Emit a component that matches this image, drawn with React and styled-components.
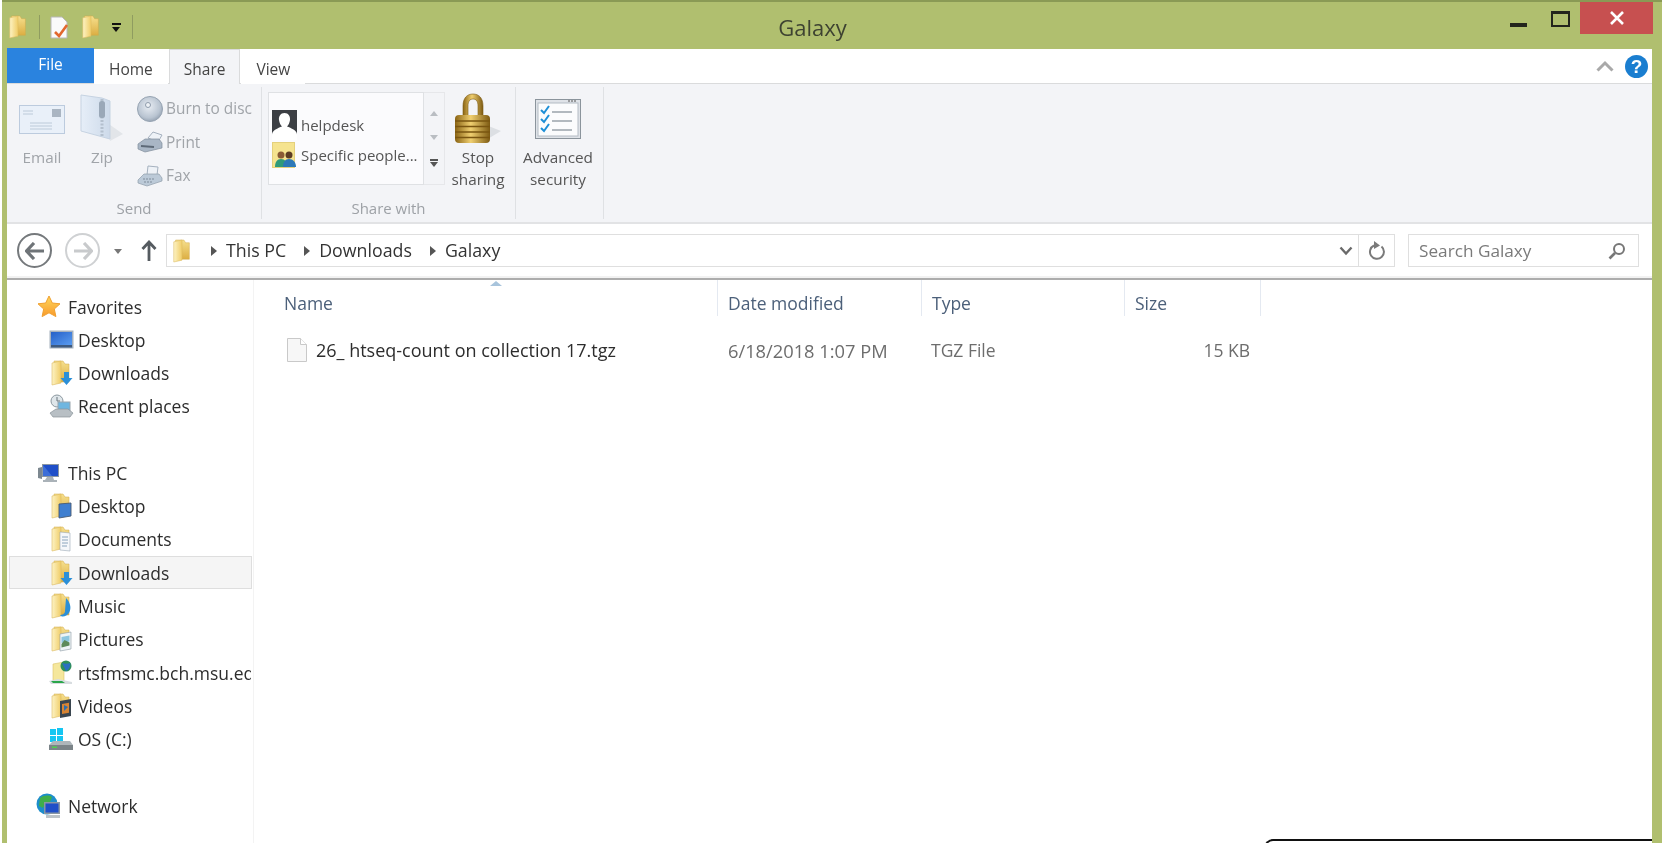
import React from "react";
import styled, { createGlobalStyle } from "styled-components";

const FONT = `"Open Sans", "Noto Sans", "Liberation Sans", sans-serif`;

const GlobalStyle = createGlobalStyle`
    html, body {
        margin: 0;
        padding: 0;
        height: 100%;
        background: #fff;
        overflow: hidden;
    }
    #root {
        height: 100%;
    }
`;

// icons ---------------------------------------------------------------

const Folder = ({ w = 24, h = 26, children }) => (
    <svg width={w} height={h} viewBox="0 0 24 26">
        <defs>
            <linearGradient id="leaf" x1="0" x2="1" y1="0" y2="0">
                <stop offset="0" stopColor="#fdf3c4" />
                <stop offset="1" stopColor="#f0cd68" />
            </linearGradient>
            <linearGradient id="back" x1="0" x2="0" y1="0" y2="1">
                <stop offset="0" stopColor="#f6e08e" />
                <stop offset="1" stopColor="#dcae42" />
            </linearGradient>
        </defs>
        <path d="M5 1h9l2 3h4v18H5z" fill="url(#back)" stroke="#d0a848" strokeWidth=".5" />
        <path d="M3 3l9-2v22l-9 2z" fill="url(#leaf)" stroke="#dcbb62" strokeWidth=".6" />
        {children}
    </svg>
);

const overlays = {
    plain: null,
    download: <path d="M15 12h5v6h3.500l-6 7-6-7H15z" fill="#2b8fd8" />,
    desktop: <path d="M10 11l12-1v13l-12 2z" fill="#3f7fd0" stroke="#4a5a70" strokeWidth=".9" />,
    documents: (
        <g>
            <path d="M11 6l10 1v18l-10-1z" fill="#f5f7fa" stroke="#9aa7b5" strokeWidth=".6" />
            <path d="M13 11h6M13 14h6M13 17h6M13 20h5" stroke="#7f9ab5" strokeWidth=".9" />
        </g>
    ),
    music: <path d="M17 5c4 4 6 10 3 15-2 3-7 5-9 2 2 0 5-1 5-4z" fill="#2b8fd8" />,
    pictures: (
        <g>
            <path d="M11 8l11-2v17l-11 2z" fill="#eef4f6" stroke="#8d9aa5" strokeWidth=".6" />
            <path d="M12.500 11l8-1.500v6l-8 1.500z" fill="#8cc6e0" />
            <path d="M12.500 18l3-4 5 2.500v3l-8 2z" fill="#5d8a5a" />
        </g>
    ),
    videos: (
        <g>
            <path d="M11 8l11-2v17l-11 2z" fill="#3a4650" />
            <path d="M13 11l7-1.200v10l-7 1.200z" fill="#d78433" />
            <path d="M15 12l4 2-4 4z" fill="#2b6fb0" />
        </g>
    ),
};

const NavFolder = ({ kind }) => <Folder>{overlays[kind]}</Folder>;

const DesktopIcon = () => (
    <svg width="25" height="20" viewBox="0 0 25 20">
        <defs>
            <linearGradient id="screen" x1="0" x2="1" y1="0" y2="1">
                <stop offset="0" stopColor="#2560c8" />
                <stop offset="1" stopColor="#5a9cf0" />
            </linearGradient>
        </defs>
        <rect x="0.500" y="0.500" width="24" height="18" fill="#a6b1bd" />
        <rect x="2" y="2" width="21" height="13" fill="url(#screen)" />
        <rect x="2" y="15" width="21" height="2.500" fill="#3d5a80" />
    </svg>
);

const RecentIcon = () => (
    <svg width="25" height="25" viewBox="0 0 25 25">
        <circle cx="8" cy="7" r="6" fill="#dfe6ea" stroke="#8c98a0" />
        <path d="M8 3v4h3" stroke="#69757d" fill="none" />
        <rect x="9" y="8" width="12" height="9" fill="#6fb6e0" stroke="#9aa5ad" />
        <path d="M1 19l6-4h12l5 4-3 4H4z" fill="#b8bfc4" stroke="#8a9399" strokeWidth=".7" />
    </svg>
);

const StarIcon = () => (
    <svg width="24" height="23" viewBox="0 0 24 23">
        <defs>
            <linearGradient id="star" x1="0" x2="0" y1="0" y2="1">
                <stop offset="0" stopColor="#fdd75a" />
                <stop offset="1" stopColor="#f99a2c" />
            </linearGradient>
        </defs>
        <path
            d="M12 1l3.300 7 7.700.800-5.700 5.200 1.600 7.600L12 17.800l-6.900 3.800 1.600-7.600L1 8.800 8.700 8z"
            fill="url(#star)"
            stroke="#f0a030"
        />
    </svg>
);

const PcIcon = () => (
    <svg width="22" height="20" viewBox="0 0 22 20">
        <path d="M0 5l4-1v12l-4-1z" fill="#7d8890" />
        <rect x="4" y="1" width="17" height="13" fill="#8b97a2" />
        <path d="M5 2h15v11H5z" fill="#1f4fc8" />
        <path d="M5 2l9 11H5z" fill="#5c8fe8" opacity=".5" />
        <path d="M9 14h6l1 3H7zM5 17h14v2H5z" fill="#aab2b8" />
    </svg>
);

const ServerIcon = () => (
    <svg width="24" height="26" viewBox="0 0 24 26">
        <path d="M4 4l11-2v19H4z" fill="#f5e79c" stroke="#dcc56a" strokeWidth=".6" />
        <circle cx="17" cy="6" r="5.500" fill="#2f8f5a" />
        <path d="M13 3c3 1 6 1 8 0 1 3-1 7-4 8z" fill="#2b6fc0" />
        <path d="M0 21l9-2 14 3v2H2z" fill="#d8dde0" />
        <path d="M2 21h11l3 2H4z" fill="#2aa64a" />
    </svg>
);

const DriveIcon = () => (
    <svg width="25" height="23" viewBox="0 0 25 23">
        <path d="M1 1h6v6H1zM8 0h6v7H8zM1 8h6v6H1zM8 8h6v6H8z" fill="#15c6f2" />
        <path d="M0 17l4-4h17l3 4v5H0z" fill="#aeb6ba" />
        <path d="M0 17h24v5H0z" fill="#7b8488" />
        <rect x="3" y="18.500" width="5" height="1.500" fill="#4fd04f" />
    </svg>
);

const NetworkIcon = () => (
    <svg width="26" height="26" viewBox="0 0 26 26">
        <circle cx="11" cy="11" r="10.500" fill="#1d8ecb" />
        <path d="M4 5c4-3 9-3 12-1l-2 5-5 1-2 5-4-2z" fill="#3fae4a" />
        <rect x="8" y="9" width="16" height="12" fill="#8a97a3" />
        <rect x="9.500" y="10.500" width="13" height="9" fill="#1f4fc8" />
        <path d="M10 22h14v3H10z" fill="#bcc3c8" />
    </svg>
);

const FileIcon = () => (
    <svg width="20" height="24" viewBox="0 0 20 24">
        <path d="M.500.500h13l6 6v17H.500z" fill="#f7f7f7" stroke="#c9c9c9" />
        <path d="M13.500.500v6h6" fill="#fff" stroke="#c9c9c9" />
    </svg>
);

const EnvelopeIcon = () => (
    <svg width="46" height="29" viewBox="0 0 46 29">
        <rect x=".500" y=".500" width="45" height="28" fill="#e9f0f9" stroke="#bccbde" />
        <rect x="33" y="4" width="9" height="8" fill="#aab5c2" />
        <path d="M4 6h10M4 9h10M11 18h22M11 21h22M11 24h22" stroke="#bccad9" />
    </svg>
);

const ZipIcon = () => (
    <svg width="44" height="50" viewBox="0 0 44 50">
        <defs>
            <linearGradient id="zipBody" x1="0" x2="1" y1="0" y2="0">
                <stop offset="0" stopColor="#e6eef8" />
                <stop offset="1" stopColor="#cddaea" />
            </linearGradient>
        </defs>
        <path d="M26 28l17 12-13 7z" fill="#e2e5e9" />
        <path d="M1 1l21 3 8 3v38L1 37z" fill="url(#zipBody)" stroke="#c6d3e2" />
        <path d="M22 5v38" stroke="#b4c0ce" strokeWidth="3" strokeDasharray="2 1.500" />
        <rect x="19" y="7" width="6" height="17" rx="2.500" fill="#9aa8b8" />
    </svg>
);

const DiscIcon = () => (
    <svg width="26" height="26" viewBox="0 0 26 26">
        <defs>
            <radialGradient id="disc" cx=".45" cy=".4" r=".65">
                <stop offset="0" stopColor="#e8edf3" />
                <stop offset=".7" stopColor="#b9c4d1" />
                <stop offset="1" stopColor="#8f9cac" />
            </radialGradient>
        </defs>
        <circle cx="13" cy="13" r="12.500" fill="url(#disc)" stroke="#96a3b2" />
        <circle cx="11" cy="9" r="2.500" fill="#eef2f6" stroke="#8f9cac" />
    </svg>
);

const PrintIcon = () => (
    <svg width="26" height="22" viewBox="0 0 26 22">
        <path d="M11 7l5-6 9 3-4 7z" fill="#eef2f7" stroke="#a5b1bf" />
        <path d="M1 13l7-5h14l3 4v5L8 21 1 18z" fill="#a9b6c5" stroke="#7f8c9b" strokeWidth=".7" />
        <path d="M4 15l13 1" stroke="#5e6a78" strokeWidth="1.800" />
    </svg>
);

const FaxIcon = () => (
    <svg width="26" height="22" viewBox="0 0 26 22">
        <path d="M11 1l10 1-1 8H10z" fill="#eef2f7" stroke="#a5b1bf" />
        <path d="M1 15l6-6h15l3 4v3L10 21 1 18z" fill="#bccad8" stroke="#8f9dab" strokeWidth=".7" />
        <path d="M6 14h12M7 17h9" stroke="#7f8c9b" strokeDasharray="2 1" />
    </svg>
);

const PersonIcon = () => (
    <svg width="25" height="30" viewBox="0 0 25 30">
        <rect width="25" height="30" fill="#3c3f44" />
        <path d="M12.500 3c4 0 6 3.500 5.500 7-.3 2.500-1.500 5-3 6.500 4 1.500 10 4 10 8V30H0v-5.500c0-4 6-6.500 10-8-1.500-1.500-2.700-4-3-6.500-.5-3.500 1.500-7 5.500-7z" fill="#fff" />
    </svg>
);

const PeopleIcon = () => (
    <svg width="25" height="26" viewBox="0 0 25 26">
        <rect x=".500" y=".500" width="22" height="25" fill="#f5e38f" stroke="#e4d07c" />
        <circle cx="9" cy="13" r="3.500" fill="#8a5a35" />
        <path d="M3 25c0-5 2-8 6-8s6 3 6 8z" fill="#2f9a7a" />
        <circle cx="17" cy="13" r="3.500" fill="#5c3c24" />
        <path d="M11 25c0-5 2-8 6-8s7 3 7 8z" fill="#2c78b8" />
    </svg>
);

const LockIcon = () => (
    <svg width="48" height="52" viewBox="0 0 48 52">
        <defs>
            <linearGradient id="brass" x1="0" x2="1" y1="0" y2="0">
                <stop offset="0" stopColor="#8a6414" />
                <stop offset=".45" stopColor="#f0cf70" />
                <stop offset="1" stopColor="#7d5a12" />
            </linearGradient>
        </defs>
        <path d="M32 32l15 6-15 9z" fill="#dcdfe3" />
        <path d="M9 24V13C9 5 13 1 19 1s10 4 10 12v11h-5V13c0-5-2-7-5-7s-5 2-5 7v11z" fill="url(#brass)" stroke="#7d5a12" strokeWidth=".6" />
        <rect x="1" y="22" width="35" height="28" rx="4" fill="url(#brass)" />
        <path d="M1 28h35M1 33.500h35M1 39h35M1 44.500h35" stroke="#7a5510" strokeWidth="1.400" />
    </svg>
);

const SecurityIcon = () => (
    <svg width="46" height="40" viewBox="0 0 46 40">
        <rect x=".500" y=".500" width="45" height="39" fill="#dfe3e8" stroke="#8b949c" />
        <rect x="3" y="4" width="40" height="33" fill="#fbfcfd" stroke="#b4bcc4" />
        <path d="M33 2h2M36 2h2M39 2h2" stroke="#555" />
        <path d="M17 13h20M17 22h20M17 31h20" stroke="#9aa3ab" strokeWidth="1.500" />
        <path d="M6 11l3 3 5-7M6 20l3 3 5-7M6 29l3 3 5-7" stroke="#1d8fd6" strokeWidth="2" fill="none" />
    </svg>
);

const DocCheckIcon = () => (
    <svg width="20" height="25" viewBox="0 0 20 25">
        <path d="M1 2h11l5 5v16H1z" fill="#fafafa" stroke="#b8b8b8" />
        <path d="M5 17l4 4 8-11" stroke="#e2682e" strokeWidth="2.600" fill="none" />
    </svg>
);

// page ----------------------------------------------------------------

const sendSmall = [
    { label: "Burn to disc", icon: <DiscIcon /> },
    { label: "Print", icon: <PrintIcon /> },
    { label: "Fax", icon: <FaxIcon /> },
];

const navItems = [
    { label: "Favorites", icon: <StarIcon />, top: true },
    { label: "Desktop", icon: <DesktopIcon /> },
    { label: "Downloads", icon: <NavFolder kind="download" /> },
    { label: "Recent places", icon: <RecentIcon /> },
    null,
    { label: "This PC", icon: <PcIcon />, top: true },
    { label: "Desktop", icon: <NavFolder kind="desktop" /> },
    { label: "Documents", icon: <NavFolder kind="documents" /> },
    { label: "Downloads", icon: <NavFolder kind="download" />, selected: true },
    { label: "Music", icon: <NavFolder kind="music" /> },
    { label: "Pictures", icon: <NavFolder kind="pictures" /> },
    { label: "rtsfmsmc.bch.msu.edu", icon: <ServerIcon /> },
    { label: "Videos", icon: <NavFolder kind="videos" /> },
    { label: "OS (C:)", icon: <DriveIcon /> },
    null,
    { label: "Network", icon: <NetworkIcon />, top: true },
];

const columns = [
    { label: "Name", width: 443 },
    { label: "Date modified", width: 204 },
    { label: "Type", width: 203 },
    { label: "Size", width: 136 },
];

const App = () => {
    return (
        <Window>
            <GlobalStyle />
            <TitleBar>
                <QuickAccess>
                    <Folder w={22} h={24} />
                    <QatSep />
                    <DocCheckIcon />
                    <Folder w={22} h={24} />
                    <QatDrop />
                    <QatSep />
                </QuickAccess>
                <Title>Galaxy</Title>
                <WindowControls>
                    <MinButton />
                    <MaxButton />
                    <CloseButton>
                        <svg width="16" height="16" viewBox="0 0 16 16">
                            <path d="M2 2l12 12M14 2L2 14" stroke="#fff" strokeWidth="2.600" />
                        </svg>
                    </CloseButton>
                </WindowControls>
            </TitleBar>

            <Content>
                <TabStrip>
                    <FileTab>File</FileTab>
                    <Tab>Home</Tab>
                    <Tab $active>Share</Tab>
                    <Tab>View</Tab>
                    <TabEnd>
                        <svg width="18" height="12" viewBox="0 0 18 12">
                            <path d="M1.500 10.500L9 3l7.500 7.500" stroke="#a9a9a9" strokeWidth="3" fill="none" />
                        </svg>
                        <HelpBadge>?</HelpBadge>
                    </TabEnd>
                </TabStrip>

                <Ribbon>
                    <Group $width={255}>
                        <GroupBody>
                            <LargeButton $width={58}>
                                <LargeIcon><EnvelopeIcon /></LargeIcon>
                                <LargeLabel>Email</LargeLabel>
                            </LargeButton>
                            <LargeButton $width={62}>
                                <LargeIcon><ZipIcon /></LargeIcon>
                                <LargeLabel>Zip</LargeLabel>
                            </LargeButton>
                            <SmallStack>
                                {sendSmall.map((item) => (
                                    <SmallRow key={item.label}>
                                        {item.icon}
                                        <span>{item.label}</span>
                                    </SmallRow>
                                ))}
                            </SmallStack>
                        </GroupBody>
                        <GroupLabel>Send</GroupLabel>
                    </Group>

                    <Group $width={254}>
                        <GroupBody>
                            <Gallery>
                                <GalleryList>
                                    <GalleryRow>
                                        <PersonIcon />
                                        <span>helpdesk</span>
                                    </GalleryRow>
                                    <GalleryRow>
                                        <PeopleIcon />
                                        <span>Specific people...</span>
                                    </GalleryRow>
                                </GalleryList>
                                <GalleryScroll>
                                    <ScrollArrow $up />
                                    <ScrollArrow />
                                    <ScrollMore />
                                </GalleryScroll>
                            </Gallery>
                            <LargeButton $width={66} $dark>
                                <LargeIcon><LockIcon /></LargeIcon>
                                <LargeLabel>Stop sharing</LargeLabel>
                            </LargeButton>
                        </GroupBody>
                        <GroupLabel>Share with</GroupLabel>
                    </Group>

                    <Group $width={88}>
                        <GroupBody $flush>
                            <LargeButton $width={84} $dark>
                                <LargeIcon><SecurityIcon /></LargeIcon>
                                <LargeLabel>Advanced security</LargeLabel>
                            </LargeButton>
                        </GroupBody>
                    </Group>
                </Ribbon>

                <AddressRow>
                    <NavCircle>
                        <svg width="20" height="18" viewBox="0 0 20 18">
                            <path d="M9 1L1.500 9 9 17M2 9h17" stroke="#6f7478" strokeWidth="3.200" fill="none" />
                        </svg>
                    </NavCircle>
                    <NavCircle $disabled>
                        <svg width="20" height="18" viewBox="0 0 20 18">
                            <path d="M11 1l7.500 8L11 17M18 9H1" stroke="#c8cacc" strokeWidth="3.200" fill="none" />
                        </svg>
                    </NavCircle>
                    <SmallDrop />
                    <UpArrow>
                        <svg width="16" height="21" viewBox="0 0 16 21">
                            <path d="M1.500 9L8 2l6.500 7M8 2v19" stroke="#555b60" strokeWidth="2.800" fill="none" />
                        </svg>
                    </UpArrow>
                    <AddressBox>
                        <Folder w={22} h={24} />
                        <Crumbs>
                            <CrumbArrow />
                            <Crumb>This PC</Crumb>
                            <CrumbArrow />
                            <Crumb>Downloads</Crumb>
                            <CrumbArrow />
                            <Crumb>Galaxy</Crumb>
                        </Crumbs>
                        <svg width="14" height="10" viewBox="0 0 14 10">
                            <path d="M1.500 1.500L7 7.500l5.500-6" stroke="#6a6a6a" strokeWidth="2.400" fill="none" />
                        </svg>
                        <RefreshCell>
                            <svg width="18" height="20" viewBox="0 0 18 20">
                                <path d="M13.500 5.500A7 7 0 1 1 6 4.500" stroke="#7a7a7a" strokeWidth="2" fill="none" />
                                <path d="M6 0l6 4.500-6 3.500z" fill="#7a7a7a" />
                            </svg>
                        </RefreshCell>
                    </AddressBox>
                    <SearchBox>
                        <span>Search Galaxy</span>
                        <svg width="18" height="18" viewBox="0 0 18 18">
                            <circle cx="11" cy="7" r="5" stroke="#777" strokeWidth="2" fill="none" />
                            <path d="M7 11l-5.500 5.500" stroke="#777" strokeWidth="2.600" />
                        </svg>
                    </SearchBox>
                </AddressRow>

                <Body>
                    <Sidebar>
                        {navItems.map((item, index) =>
                            item ? (
                                <NavRow key={index} $top={item.top} $selected={item.selected}>
                                    <NavIcon $top={item.top}>{item.icon}</NavIcon>
                                    <NavText>{item.label}</NavText>
                                </NavRow>
                            ) : (
                                <NavSpacer key={index} />
                            )
                        )}
                    </Sidebar>
                    <Main>
                        <SortMark />
                        <HeaderRow>
                            {columns.map((col, index) => (
                                <HeaderCell key={col.label} $width={col.width} $first={index === 0}>
                                    {col.label}
                                </HeaderCell>
                            ))}
                        </HeaderRow>
                        <FileRow>
                            <NameCell>
                                <FileIcon />
                                <span>26_ htseq-count on collection 17.tgz</span>
                            </NameCell>
                            <DateCell>6/18/2018 1:07 PM</DateCell>
                            <TypeCell>TGZ File</TypeCell>
                            <SizeCell>15 KB</SizeCell>
                        </FileRow>
                    </Main>
                </Body>
                <CornerMark />
            </Content>
        </Window>
    );
};

const Window = styled.div`
    position: relative;
    display: flex;
    flex-direction: column;
    height: 100vh;
    box-sizing: border-box;
    margin-left: 2px;
    padding: 0 10px 0 5px;
    background: #b0bf6f;
    border-top: 2px solid #8a9a55;
    font-family: ${FONT};
    filter: blur(0.35px);
    overflow: hidden;
`;

const TitleBar = styled.div`
    display: flex;
    align-items: flex-start;
    height: 47px;
    flex: none;
`;

const QuickAccess = styled.div`
    display: flex;
    align-items: center;
    gap: 10px;
    width: 140px;
    height: 36px;
    padding-top: 7px;
`;

const QatSep = styled.div`
    width: 1px;
    height: 24px;
    background: #8f9c60;
`;

const QatDrop = styled.div`
    width: 9px;
    height: 8px;
    border-top: 2px solid #111;
    box-sizing: border-box;
    margin-right: 1px;
    position: relative;
    &::after {
        content: "";
        position: absolute;
        left: 0;
        top: 2px;
        border: 4.500px solid transparent;
        border-top: 5px solid #111;
    }
`;

const Title = styled.div`
    flex: 1;
    text-align: center;
    padding-right: 32px;
    font-size: 22px;
    line-height: 51px;
    color: #3d4231;
`;

const WindowControls = styled.div`
    display: flex;
    align-items: flex-start;
    margin-right: -1px;
`;

const MinButton = styled.div`
    width: 17px;
    height: 4px;
    margin: 21px 24px 0 0;
    background: #23251c;
`;

const MaxButton = styled.div`
    width: 19px;
    height: 16px;
    box-sizing: border-box;
    margin: 9px 10px 0 0;
    border: 2px solid #23251c;
    border-top-width: 3px;
`;

const CloseButton = styled.div`
    display: flex;
    align-items: center;
    justify-content: center;
    width: 73px;
    height: 32px;
    background: #c75050;
`;

const Content = styled.div`
    flex: 1;
    min-height: 0;
    display: flex;
    flex-direction: column;
    background: #fff;
`;

const TabStrip = styled.div`
    display: flex;
    align-items: flex-end;
    height: 35px;
    flex: none;
    background: #fff;
    border-bottom: 1px solid #dadbdc;
    box-sizing: border-box;
`;

const FileTab = styled.div`
    width: 87px;
    height: 35px;
    background: #2a83df;
    color: #fff;
    font-size: 15.500px;
    line-height: 32px;
    text-align: center;
`;

const Tab = styled.div`
    box-sizing: border-box;
    height: 35px;
    margin-bottom: -1px;
    padding: 0 14px;
    margin-right: 1px;
    font-size: 15.500px;
    line-height: 39px;
    color: #444;
    background: ${(p) => (p.$active ? "#f3f4f7" : "#fff")};
    border: 1px solid ${(p) => (p.$active ? "#dadbdc" : "transparent")};
    border-bottom: none;
`;

const TabEnd = styled.div`
    margin-left: auto;
    align-self: center;
    display: flex;
    align-items: center;
    gap: 11px;
    padding-right: 4px;
`;

const HelpBadge = styled.div`
    width: 23px;
    height: 23px;
    border-radius: 50%;
    background: #1a7ed0;
    color: #fff;
    font-family: "Liberation Sans", sans-serif;
    font-weight: 700;
    font-size: 19px;
    line-height: 23px;
    text-align: center;
`;

const Ribbon = styled.div`
    display: flex;
    flex: none;
    height: 140px;
    box-sizing: border-box;
    background: #f3f4f7;
    border-bottom: 2px solid #e2e3e5;
`;

const Group = styled.div`
    display: flex;
    flex-direction: column;
    width: ${(p) => p.$width}px;
    box-sizing: border-box;
    margin: 3px 0;
    padding-top: 5px;
    border-right: 1px solid #dfe1e4;
`;

const GroupBody = styled.div`
    display: flex;
    flex: 1;
    padding-left: ${(p) => (p.$flush ? "0" : "6px")};
`;

const GroupLabel = styled.div`
    font-size: 15px;
    line-height: 22px;
    text-align: center;
    color: #9da1a6;
`;

const LargeButton = styled.div`
    display: flex;
    flex-direction: column;
    align-items: center;
    width: ${(p) => p.$width}px;
    color: ${(p) => (p.$dark ? "#555" : "#a0a4a9")};
    flex: none;
`;

const LargeIcon = styled.div`
    display: flex;
    align-items: center;
    justify-content: center;
    height: 54px;
`;

const LargeLabel = styled.div`
    font-size: 15.300px;
    line-height: 22px;
    text-align: center;
`;

const SmallStack = styled.div`
    display: flex;
    flex-direction: column;
    margin-left: 4px;
`;

const SmallRow = styled.div`
    display: flex;
    align-items: center;
    gap: 3px;
    height: 33.500px;
    font-size: 15.400px;
    color: #a0a4a9;
    white-space: nowrap;
`;

const Gallery = styled.div`
    display: flex;
    width: 177px;
    height: 93px;
    flex: none;
`;

const GalleryList = styled.div`
    display: flex;
    flex-direction: column;
    justify-content: center;
    width: 156px;
    box-sizing: border-box;
    padding: 2px 2px 0 3px;
    background: #fbfbfd;
    border: 1px solid #dfe1e4;
`;

const GalleryRow = styled.div`
    display: flex;
    align-items: center;
    gap: 4px;
    height: 30px;
    font-size: 15px;
    color: #555;
    white-space: nowrap;
`;

const GalleryScroll = styled.div`
    display: flex;
    flex-direction: column;
    align-items: center;
    justify-content: space-around;
    width: 21px;
    padding: 8px 0;
    box-sizing: border-box;
    border: 1px solid #e6e7ea;
    border-left: none;
`;

const ScrollArrow = styled.div`
    width: 0;
    height: 0;
    border-left: 4px solid transparent;
    border-right: 4px solid transparent;
    border-top: ${(p) => (p.$up ? "none" : "5px solid #b9bdc2")};
    border-bottom: ${(p) => (p.$up ? "5px solid #b9bdc2" : "none")};
`;

const ScrollMore = styled.div`
    width: 8px;
    height: 7px;
    box-sizing: border-box;
    border-top: 2px solid #555;
    position: relative;
    &::after {
        content: "";
        position: absolute;
        left: 0;
        top: 1px;
        border: 4px solid transparent;
        border-top: 5px solid #555;
    }
`;

const AddressRow = styled.div`
    display: flex;
    align-items: center;
    flex: none;
    height: 56px;
    padding: 0 13px 1px 10px;
    box-sizing: border-box;
    border-bottom: 2px solid #adadad;
    box-shadow: inset 0 -2px 0 #f2f2f2;
`;

const NavCircle = styled.div`
    display: flex;
    align-items: center;
    justify-content: center;
    width: 35px;
    height: 35px;
    box-sizing: border-box;
    margin-right: 13px;
    border-radius: 50%;
    border: 2px solid ${(p) => (p.$disabled ? "#cfd1d3" : "#75797c")};
    background: #fff;
`;

const SmallDrop = styled.div`
    width: 0;
    height: 0;
    margin: 2px 0 0 1px;
    border-left: 4.500px solid transparent;
    border-right: 4.500px solid transparent;
    border-top: 5px solid #777;
`;

const UpArrow = styled.div`
    display: flex;
    margin: 0 9px 0 19px;
`;

const AddressBox = styled.div`
    display: flex;
    align-items: center;
    flex: 1;
    height: 33px;
    box-sizing: border-box;
    padding-left: 4px;
    border: 1px solid #dfdfdf;
    background: #fff;
`;

const Crumbs = styled.div`
    display: flex;
    align-items: center;
    flex: 1;
    margin-left: 18px;
`;

const CrumbArrow = styled.div`
    width: 0;
    height: 0;
    margin: 1px 9px 0 0;
    border-top: 5.500px solid transparent;
    border-bottom: 5.500px solid transparent;
    border-left: 6px solid #555;
`;

const Crumb = styled.div`
    font-size: 17.800px;
    line-height: 24px;
    margin: -2px 18px 0 0;
    color: #333;
`;

const RefreshCell = styled.div`
    display: flex;
    align-items: center;
    justify-content: center;
    width: 35px;
    height: 100%;
    margin-left: 5px;
    border-left: 1px solid #dfdfdf;
`;

const SearchBox = styled.div`
    display: flex;
    align-items: center;
    justify-content: space-between;
    width: 231px;
    height: 33px;
    box-sizing: border-box;
    margin-left: 13px;
    padding: 0 12px 0 10px;
    border: 1px solid #dfdfdf;
    font-size: 17.200px;
    color: #7a7a7a;
`;

const Body = styled.div`
    display: flex;
    flex: 1;
    min-height: 0;
`;

const Sidebar = styled.div`
    width: 247px;
    flex: none;
    box-sizing: border-box;
    padding: 10px 1px 0 2px;
    border-right: 1px solid #f3f3f3;
    overflow: hidden;
`;

const NavRow = styled.div`
    display: flex;
    align-items: center;
    height: 33.270px;
    box-sizing: border-box;
    padding-left: ${(p) => (p.$top ? "26px" : "38px")};
    background: ${(p) => (p.$selected ? "#f5f5f5" : "transparent")};
    border: 1px solid ${(p) => (p.$selected ? "#dedede" : "transparent")};
    overflow: hidden;
`;

const NavIcon = styled.div`
    display: flex;
    align-items: center;
    justify-content: center;
    width: 26px;
    margin-right: ${(p) => (p.$top ? "6px" : "4px")};
    flex: none;
`;

const NavText = styled.div`
    font-size: 17.500px;
    color: #2d2d2d;
    white-space: nowrap;
`;

const NavSpacer = styled.div`
    height: 33.270px;
`;

const Main = styled.div`
    position: relative;
    flex: 1;
    min-width: 0;
`;

const SortMark = styled.div`
    position: absolute;
    top: 1px;
    left: 236px;
    width: 0;
    height: 0;
    border-left: 6px solid transparent;
    border-right: 6px solid transparent;
    border-bottom: 5px solid #a8c4dc;
`;

const HeaderRow = styled.div`
    display: flex;
    height: 36px;
    padding-left: 21px;
`;

const HeaderCell = styled.div`
    box-sizing: border-box;
    width: ${(p) => p.$width}px;
    padding-left: ${(p) => (p.$first ? "9px" : "10px")};
    font-size: 17.500px;
    line-height: 46px;
    color: #4c607a;
    border-right: 1px solid #e4e9f1;
`;

const FileRow = styled.div`
    display: flex;
    align-items: center;
    height: 34px;
    margin-top: 17px;
    padding-left: 21px;
    font-size: 17.500px;
`;

const NameCell = styled.div`
    display: flex;
    align-items: center;
    gap: 9px;
    width: 443px;
    box-sizing: border-box;
    padding-left: 12px;
    font-size: 18px;
    color: #2d2d2d;
    white-space: nowrap;
`;

const DateCell = styled.div`
    width: 204px;
    box-sizing: border-box;
    padding-left: 10px;
    font-size: 18.300px;
    color: #6d6d6d;
    white-space: nowrap;
`;

const TypeCell = styled.div`
    width: 203px;
    box-sizing: border-box;
    padding-left: 9px;
    color: #6d6d6d;
`;

const SizeCell = styled.div`
    width: 136px;
    box-sizing: border-box;
    padding-right: 11px;
    text-align: right;
    color: #6d6d6d;
`;

const CornerMark = styled.div`
    position: absolute;
    right: 10px;
    bottom: -8px;
    width: 388px;
    height: 12px;
    box-sizing: border-box;
    background: #fff;
    border-top: 2px solid #111;
    border-left: 2px solid #111;
    border-top-left-radius: 9px;
`;

export default App;
